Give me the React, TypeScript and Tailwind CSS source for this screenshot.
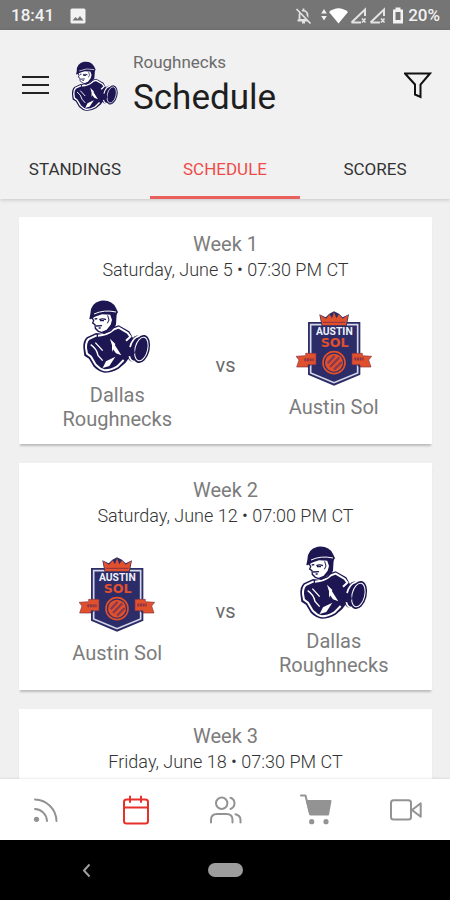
import type { ReactNode } from 'react';

type TeamId = 'dallas' | 'austin';

interface Game {
  week: string;
  date: string;
  home: TeamId;
  away: TeamId;
}

const teamNames: Record<TeamId, string> = {
  dallas: 'Dallas Roughnecks',
  austin: 'Austin Sol',
};

const games: Game[] = [
  { week: 'Week 1', date: 'Saturday, June 5 • 07:30 PM CT', home: 'dallas', away: 'austin' },
  { week: 'Week 2', date: 'Saturday, June 12 • 07:00 PM CT', home: 'austin', away: 'dallas' },
  { week: 'Week 3', date: 'Friday, June 18 • 07:30 PM CT', home: 'dallas', away: 'austin' },
];

const RoughnecksLogo = ({ className }: { className: string }) => (
  <svg viewBox="27 24 228 228" className={className} aria-hidden="true">
    {/* Shoulders and arms */}
    <path
      d="M78 129 L50 142 Q39 152 40 174 L43 197 L57 206 L71 230 Q86 245 104 248 Q126 248 146 236 L166 219 L182 198 L192 150 L178 124 L146 106 L128 112 L104 132 Z"
      fill="#1c1753"
    />
    <path
      d="M80 136 L56 147 Q47 156 48 174 L51 191 L63 200 L77 224 Q90 238 104 241 Q122 241 142 229 L161 210"
      fill="none"
      stroke="#fff"
      strokeWidth="6"
    />
    <path d="M84 137 Q112 136 132 118 L146 113 L173 129 L181 140 L168 152" fill="none" stroke="#fff" strokeWidth="6" />
    <path d="M62 164 Q80 176 84 196 L98 212 M76 158 L98 182" fill="none" stroke="#fff" strokeWidth="4" />
    <path d="M120 146 L136 162 L126 186 L126 166 Z M134 164 L154 196 L138 190 L128 176 Z" fill="#fff" />
    <path d="M98 234 L108 214 L136 200 L118 228 Z" fill="#fff" />
    {/* Head */}
    <path d="M66 82 L71 92 L68 99 L75 104 L76 115 L85 124 L102 130 L122 122 L134 108 L137 70 L90 68 Z" fill="#fff" stroke="#1c1753" strokeWidth="4" />
    <path d="M74 87 L82 86 M88 89 Q98 84 108 89 M90 92 L102 92 M78 108 L96 107 M86 114 L92 114" fill="none" stroke="#1c1753" strokeWidth="4" />
    <path d="M120 72 L140 70 L138 104 L124 118 L103 131 L92 127 L110 119 L122 104 L126 90 Z" fill="#1c1753" />
    <path d="M113 76 L117 90 L112 100" fill="none" stroke="#1c1753" strokeWidth="3" />
    {/* Hard hat */}
    <path d="M58 87 L61 72 Q60 40 92 32 Q126 28 138 54 L144 67 L138 75 L96 73 L74 80 L62 88 Z" fill="#1c1753" />
    <path d="M72 72 Q102 58 138 66" fill="none" stroke="#fff" strokeWidth="3" />
    {/* Dumbbell */}
    <ellipse cx="194" cy="176" rx="20" ry="40" transform="rotate(14 194 176)" fill="#1c1753" />
    <ellipse cx="198" cy="177" rx="19" ry="38" transform="rotate(14 198 177)" fill="none" stroke="#fff" strokeWidth="5" />
    <ellipse cx="214" cy="177" rx="25" ry="43" transform="rotate(14 214 177)" fill="#1c1753" />
    <ellipse cx="214" cy="177" rx="19" ry="36" transform="rotate(14 214 177)" fill="none" stroke="#fff" strokeWidth="3" />
    <path d="M160 180 L174 169 L192 176 L195 190 L181 199 L162 197 Z" fill="#1c1753" />
  </svg>
);

const SolLogo = ({ className }: { className: string }) => (
  <svg viewBox="33 30 228 228" className={className} aria-hidden="true">
    {/* Shield */}
    <path d="M69 66 H226 V224 L147 257 L69 224 Z" fill="#2c2c68" />
    <path d="M77 74 H218 V219 L147 248 L77 219 Z" fill="#2c2c68" stroke="#d5d8e8" strokeWidth="5" />
    {/* Crown */}
    <path d="M103 43 L122 52 L133 41 L147 34 L162 41 L173 52 L192 43 L185 79 H110 Z" fill="#2c2c68" />
    <path d="M105 44 L123 56 L134 43 L141 55 L147 36 L154 55 L162 43 L173 56 L190 44 L183 76 H112 Z" fill="#e1502c" />
    <path d="M114 67 H181" stroke="#8a3548" strokeWidth="3" />
    <text x="148" y="106" textAnchor="middle" fontFamily="Roboto, sans-serif" fontWeight="700" fontSize="31" fill="#eef0f8">
      AUSTIN
    </text>
    <text x="149" y="142" textAnchor="middle" fontFamily="'DejaVu Sans', sans-serif" fontWeight="700" fontSize="38" fill="#e1502c">
      SOL
    </text>
    {/* Ribbon */}
    <path d="M33 169 L42 180 L35 201 H69 V194 H93 V160 H62 V167 Z" fill="#e1502c" stroke="#873546" strokeWidth="2" />
    <path d="M260 169 L251 180 L258 201 H225 V194 H201 V160 H232 V167 Z" fill="#e1502c" stroke="#873546" strokeWidth="2" />
    <path d="M58 179 H86 M208 177 H236" stroke="#8a3548" strokeWidth="9" strokeDasharray="6 2" />
    <path d="M69 201 L76 194 M225 201 L218 194" stroke="#2c2c68" strokeWidth="4" />
    {/* Disc */}
    <circle cx="147" cy="188" r="39" fill="#2c2c68" />
    <circle cx="147" cy="188" r="33" fill="none" stroke="#e1502c" strokeWidth="5" />
    <circle cx="147" cy="188" r="27" fill="#e1502c" />
    <path d="M128 190 L149 167 M135 201 L163 172 M147 209 L170 186" stroke="#873a50" strokeWidth="7" />
  </svg>
);

const TeamLogo = ({ team, className }: { team: TeamId; className: string }) =>
  team === 'dallas' ? <RoughnecksLogo className={className} /> : <SolLogo className={className} />;

const Team = ({ team }: { team: TeamId }) => (
  <div className="flex flex-col items-center">
    <TeamLogo team={team} className="size-[76px]" />
    <span className="mt-[9px] max-w-[120px] text-center text-[20px] leading-6">{teamNames[team]}</span>
  </div>
);

const GameCard = ({ game }: { game: Game }) => (
  <article className="shrink-0 bg-white pt-3.5 pb-[13px] text-[#7c7c7c] shadow-[0_3px_2px_-1px_rgba(0,0,0,0.22)]">
    <h2 className="text-center text-[20px] leading-[26px]">{game.week}</h2>
    <p className="text-center text-[18px] leading-[26px] font-light text-[#333]">{game.date}</p>
    <div className="mt-[15px] grid grid-cols-[1fr_auto_1fr] items-center">
      <Team team={game.home} />
      <span className="text-[20px] leading-6 text-[#6a6a6a]">vs</span>
      <Team team={game.away} />
    </div>
  </article>
);

const StatusBar = () => (
  <div className="flex h-[30px] shrink-0 items-center bg-[#757575] pr-2.5 pl-[11px] pt-0.5 text-[17px] font-medium text-[#f2f2f2]">
    <span>18:41</span>
    <svg viewBox="0 0 16 16" className="ml-4 size-4" aria-hidden="true">
      <rect x="0.5" y="0.5" width="15" height="15" rx="1.5" fill="#f2f2f2" />
      <path d="M2.5 12.5 L5.5 9 L7.5 11 L10 8 L13.5 12.5 Z" fill="#757575" />
    </svg>
    <svg viewBox="0 0 110 18" className="ml-auto h-[18px] w-[110px]" aria-hidden="true">
      {/* Muted bell */}
      <path d="M6.5 13 V8 Q6.5 4.5 10.5 3.5 Q14.5 4.5 14.5 8 V13 Z" fill="none" stroke="#e4e4e4" strokeWidth="1.8" />
      <path d="M4.5 13.5 H16.5 M9 15.5 H12 M10.5 1.5 V3" stroke="#e4e4e4" strokeWidth="1.8" />
      <path d="M4.5 1.5 L18.5 16" stroke="#757575" strokeWidth="3" />
      <path d="M3.5 2 L17.5 16.5" stroke="#e4e4e4" strokeWidth="1.7" />
      {/* Wifi */}
      <path d="M31 2 L33.8 6.5 H28.2 Z M31 13.5 L28.2 9 H33.8 Z" fill="#f2f2f2" />
      <path d="M36 5 Q45.5 -2.5 55 5 L45.5 16.5 Z" fill="#fff" />
      {/* Signal */}
      <path d="M58.5 15.5 L72 2.5 V9 M58.5 15.5 H68 M77.5 15.5 L91 2.5 V9 M77.5 15.5 H87" fill="none" stroke="#e4e4e4" strokeWidth="2" />
      <path d="M69 11.5 L72.5 15.5 M72.5 11.5 L69 15.5 M88 11.5 L91.5 15.5 M91.5 11.5 L88 15.5" stroke="#e4e4e4" strokeWidth="1.6" />
      {/* Battery */}
      <path d="M102.5 0.5 H107.5 V2.5 H110 V16.5 H100 V2.5 H102.5 Z" fill="#f2f2f2" />
      <rect x="102.5" y="5" width="5" height="8" fill="#757575" />
    </svg>
    <span className="ml-[5px]">20%</span>
  </div>
);

const tabs = ['STANDINGS', 'SCHEDULE', 'SCORES'];

const Header = () => (
  <header className="relative shrink-0 bg-[#f1f1f1] shadow-[0_1px_4px_rgba(0,0,0,0.18)]">
    <div className="flex items-center pt-5 pr-[18px] pb-[18px] pl-[22px]">
      <button type="button" aria-label="Menu">
        <svg viewBox="0 0 28 22" className="h-[22px] w-7" aria-hidden="true">
          <path d="M0 2 H27 M0 10 H27 M0 18 H27" stroke="#222" strokeWidth="2" />
        </svg>
      </button>
      <RoughnecksLogo className="ml-[19px] size-[52px]" />
      <div className="ml-3">
        <p className="text-[17px] leading-6 text-[#6b6b6b]">Roughnecks</p>
        <h1 className="text-[35px] leading-[48px] text-[#1e1e1e]">Schedule</h1>
      </div>
      <button type="button" aria-label="Filter" className="ml-auto">
        <svg viewBox="0 0 28 28" className="size-7" fill="none" stroke="#111" strokeWidth="2" aria-hidden="true">
          <path d="M1 1.5 H26 L16.5 12.5 V25 L11 22.5 V12.5 Z" />
        </svg>
      </button>
    </div>
    <div className="grid grid-cols-3" role="tablist">
      {tabs.map((tab) => (
        <button
          key={tab}
          type="button"
          role="tab"
          aria-selected={tab === 'SCHEDULE'}
          className="h-[59px] border-b-3 border-transparent pt-1 text-[17px] text-[#333] aria-selected:border-[#e9605c] aria-selected:text-[#ee4b48]"
        >
          {tab}
        </button>
      ))}
    </div>
  </header>
);

const NavLink = ({ label, active, children }: { label: string; active?: boolean; children: ReactNode }) => (
  <a
    href="#"
    aria-label={label}
    aria-current={active ? 'page' : undefined}
    className="flex items-center justify-center text-[#939393] aria-[current=page]:text-[#e8302a]"
  >
    <svg
      viewBox="0 0 36 36"
      className="size-9"
      fill="none"
      stroke="currentColor"
      strokeWidth="2"
      strokeLinecap="round"
      strokeLinejoin="round"
      aria-hidden="true"
    >
      {children}
    </svg>
  </a>
);

const BottomNav = () => (
  <nav className="relative grid h-[61px] shrink-0 grid-cols-5 bg-white shadow-[0_-1px_2px_rgba(0,0,0,0.08)]">
    <NavLink label="News">
      <path d="M8 7.5 A22 22 0 0 1 29.5 29 M8 17 A12.5 12.5 0 0 1 20 29" />
      <circle cx="9.5" cy="27.3" r="2.6" fill="currentColor" stroke="none" />
    </NavLink>
    <NavLink label="Schedule" active>
      <rect x="7" y="7.5" width="24" height="24" rx="2.5" />
      <path d="M7 15.5 H31 M13 4.5 V10 M24 4.5 V10" />
    </NavLink>
    <NavLink label="Players">
      <circle cx="14.7" cy="11.3" r="5.7" />
      <path d="M4 30.5 V28 Q4 22 10 22 H19.5 Q25.5 22 25.5 28 V30.5 M23.5 5.7 A6 6 0 0 1 23.5 17 M28.5 22.3 Q33.5 23.5 33.5 28 V30.5" />
    </NavLink>
    <NavLink label="Shop">
      <path d="M4 3.5 H8.5 L13 22" />
      <path d="M10 9 H33.5 L31 22.5 H13.5 Z" fill="currentColor" />
      <g fill="currentColor" stroke="none">
        <circle cx="14.7" cy="29.7" r="2.6" />
        <circle cx="29" cy="29.7" r="2.6" />
      </g>
    </NavLink>
    <NavLink label="Videos">
      <rect x="4" y="8.3" width="20" height="19.3" rx="2.5" />
      <path d="M25 18 L33.7 11.3 V24.7 Z" />
    </NavLink>
  </nav>
);

const SystemBar = () => (
  <div className="grid h-[60px] shrink-0 grid-cols-5 items-center bg-black">
    <button type="button" aria-label="Back" className="col-start-1 flex justify-end">
      <svg viewBox="0 0 12 16" className="h-4 w-3" fill="none" stroke="#a0a0a0" strokeWidth="2" aria-hidden="true">
        <path d="M11.5 2.5 L6 8.5 L11.5 14.5" />
      </svg>
    </button>
    <button type="button" aria-label="Home" className="col-start-3 h-3.5 w-[35px] justify-self-center rounded-full bg-[#9c9c9c]" />
  </div>
);

const App = () => (
  <div className="flex h-screen flex-col bg-[#f0f0f0] font-['Roboto',sans-serif]">
    <StatusBar />
    <Header />
    <main className="flex min-h-0 flex-1 flex-col gap-[19px] overflow-y-auto pt-[18px] pr-[18px] pl-[19px] [scrollbar-width:none]">
      {games.map((game) => (
        <GameCard key={game.week} game={game} />
      ))}
    </main>
    <BottomNav />
    <SystemBar />
  </div>
);

export default App;
